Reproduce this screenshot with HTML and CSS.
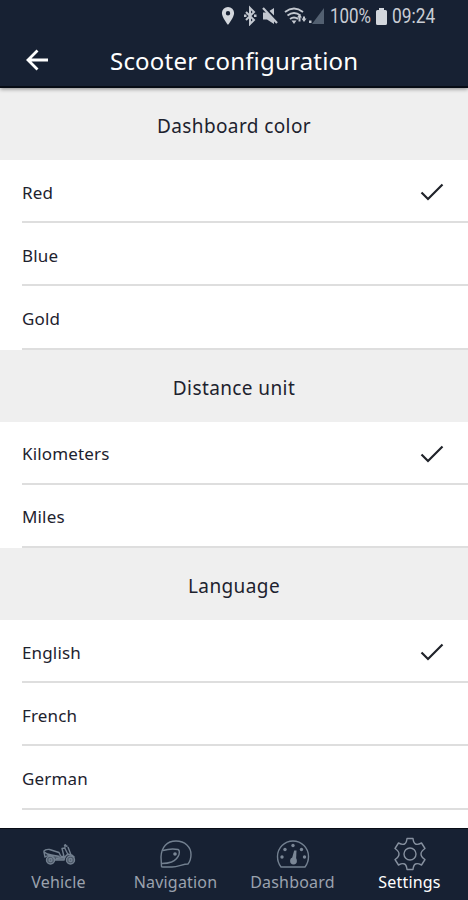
FILE: index.html
```html
<!DOCTYPE html>
<html lang="en">
<head>
<meta charset="utf-8">
<title>Scooter configuration</title>
<link rel="stylesheet" href="styles.css">
</head>
<body>
<div class="app">
  <header class="topbar">
    <div class="status">
      <svg class="status-icons" width="116" height="26" viewBox="0 0 116 26">
        <path fill="#d3d7dd" fill-rule="evenodd" d="M8 7a6.1 6.1 0 0 0-6.1 6.1C1.900 17.500 8 25 8 25s6.100-7.500 6.100-11.900A6.100 6.100 0 0 0 8 7zm0 4a2.200 2.200 0 1 1 0 4.400 2.200 2.200 0 0 1 0-4.400z"/>
        <path fill="none" stroke="#c3c8d0" stroke-width="2" d="M26 12l8 8-4 4V8l4 4-8 8"/>
        <path fill="#c3c8d0" d="M24 14.500h2.500v2.500H24zM34 14.500h2.500v2.500H34z"/>
        <path fill="#c3c8d0" d="M43 12.500h4l7-4.500v16l-7-4.500h-4z"/>
        <path stroke="#172133" stroke-width="3" d="M44.500 8l14 14"/>
        <path stroke="#c3c8d0" stroke-width="2.200" d="M43 8l14 15"/>
        <g fill="none" stroke="#c3c8d0" stroke-width="1.900"><path d="M65 12q9-7 18 0M67.500 15.500q6.500-5 13 0M70 19q4-3 8 0"/></g>
        <path fill="#c3c8d0" d="M71.500 20.500h5l-2.500 3.500zM77 17.500l2.500-3.500 2.500 3.500h-1.500v4h-2v-4zM81.500 18.500h1.500v-2h2v2h1.500L84 22zM89 20.500h2.500V23H89z"/>
        <path fill="#536071" d="M104 8v16H92z"/>
      </svg>
      <span class="percent">100%</span>
      <svg class="battery" width="11" height="17" viewBox="0 0 11 17"><path fill="#d3d7dd" d="M3 0h5v2h1.500q1.500 0 1.500 1.500v12Q11 17 9.500 17h-8Q0 17 0 15.500v-12Q0 2 1.500 2H3z"/></svg>
      <span class="clock">09:24</span>
    </div>
    <div class="titlebar">
      <svg class="back" width="24" height="24" viewBox="0 0 24 24"><path fill="none" stroke="#fff" stroke-width="2.800" d="M23 12H3M12.500 2.500L3 12l9.500 9.500"/></svg>
      <h1>Scooter configuration</h1>
    </div>
  </header>

  <main class="content">
    <section>
      <h2>Dashboard color</h2>
      <ul>
        <li><span>Red</span><svg class="check" width="24" height="18" viewBox="0 0 24 18"><path d="M1.500 9.500L8 16 22.500 1.500"/></svg></li>
        <li><span>Blue</span></li>
        <li><span>Gold</span></li>
      </ul>
    </section>
    <section>
      <h2>Distance unit</h2>
      <ul>
        <li><span>Kilometers</span><svg class="check" width="24" height="18" viewBox="0 0 24 18"><path d="M1.500 9.500L8 16 22.500 1.500"/></svg></li>
        <li><span>Miles</span></li>
      </ul>
    </section>
    <section>
      <h2>Language</h2>
      <ul>
        <li><span>English</span><svg class="check" width="24" height="18" viewBox="0 0 24 18"><path d="M1.500 9.500L8 16 22.500 1.500"/></svg></li>
        <li><span>French</span></li>
        <li><span>German</span></li>
      </ul>
    </section>
  </main>

  <nav class="tabs">
    <a class="tab">
      <svg width="34" height="34" viewBox="0 0 34 34">
        <g class="shade"><circle cx="8.500" cy="23" r="4"/><circle cx="28.500" cy="23" r="4"/><path d="M6 20l6-2 10 2v3h-9z"/></g>
        <circle cx="8.500" cy="23" r="4"/><circle cx="28.500" cy="23" r="4"/><circle cx="8.500" cy="23" r="1.500"/><circle cx="28.500" cy="23" r="1.500"/>
        <path d="M1.500 14.500q2-2.500 6-2l9.500 3 2 4M1.500 14.500q3 3 8 3.500l8 1.500M2 15l1 5q6-4 10 3h9q1-5 5-6M22 8l3.500 1.500M24 7.500q-2 2-1 4l3 6q4-.500 6.500 3M23 11l-3 .500 2 8h-3M26 10l3 8M14 21.500l8-1"/>
      </svg>
      <span>Vehicle</span>
    </a>
    <a class="tab">
      <svg width="34" height="34" viewBox="0 0 34 34">
        <path d="M2.500 29.500L2 20C2.500 10 8 4 17 4c9 0 15 6 15 13.500 0 4-1 7-3 9.500-5 0-10 3-16 3H4q-1.500 0-1.500-.500z"/>
        <path d="M4 13.500Q12 11 19 12.500q2 1 1 5-1.500 5-7.500 7.500-4 1.500-9.500 1.500"/>
        <circle class="solid" cx="16" cy="17" r="1.800"/>
      </svg>
      <span>Navigation</span>
    </a>
    <a class="tab">
      <svg width="34" height="34" viewBox="0 0 34 34">
        <path d="M5 30Q1.500 25.500 1.500 19.500a15.500 15.500 0 0 1 31 0q0 6-3.500 10.500z"/>
        <g class="solid"><circle cx="6" cy="20" r="1.700"/><circle cx="9" cy="12.500" r="1.700"/><circle cx="17" cy="8.500" r="1.700"/><circle cx="25.500" cy="12.500" r="1.700"/><circle cx="28.500" cy="20" r="1.700"/><circle cx="17.500" cy="24" r="3.400"/><path d="M15.500 23l2.700-9.500h2.300L20 24z"/></g>
      </svg>
      <span>Dashboard</span>
    </a>
    <a class="tab active">
      <svg width="34" height="34" viewBox="0 0 34 34">
        <circle cx="17" cy="17" r="6"/>
        <path d="M14 1.500h6q.500 4.500 2.500 5.500t6-1l3.500 5.500q-4 2.500-4 5.500t4 5.500L28.500 28q-4-2-6-1t-2.500 5.500h-6q-.500-4.500-2.500-5.500t-6 1L2 22.500Q6 20 6 17t-4-5.500L5.500 6q4 2 6 1T14 1.500z"/>
      </svg>
      <span>Settings</span>
    </a>
  </nav>
</div>
</body>
</html>
```
FILE: styles.css
```css
* { box-sizing: border-box; }
body { margin: 0; background: #fff; color: #1d222e; font-family: "Noto Sans", sans-serif; }
h1, h2, ul { margin: 0; padding: 0; font-weight: 400; }
svg { display: block; flex: none; }
.app { height: 900px; display: flex; flex-direction: column; overflow: hidden; }
.topbar { height: 88px; flex: none; background: #172133; border-bottom: 2px solid #070c15; box-shadow: 0 1px 4px rgba(0,0,0,.45); z-index: 1; }
.status { height: 34px; padding-left: 220px; display: flex; align-items: flex-start; color: #c9cdd5; font: 19.5px/34px Roboto, sans-serif; }
.percent { width: 42px; margin-left: -6px; transform: scaleX(.87); transform-origin: left; }
.battery { margin: 8px 5px 0 4px; }
.clock { transform: scaleX(.89); transform-origin: left; }
.titlebar { height: 52px; display: flex; align-items: center; padding-left: 25px; color: #fff; }
h1 { margin-left: 61px; padding-top: 2px; font-size: 24px; line-height: 52px; letter-spacing: .2px; white-space: nowrap; }
.content { flex: 1; min-height: 0; overflow: hidden; }
h2 { height: 72px; background: #efefef; font-size: 19px; line-height: 76px; letter-spacing: .4px; text-align: center; }
ul { list-style: none; }
li { height: 63.2px; margin-left: 22px; padding-right: 24px; display: flex; align-items: center; justify-content: space-between; border-bottom: 2px solid #dedede; font-size: 17px; letter-spacing: .15px; }
li span { padding-top: 3px; }
.check { margin-top: 3px; fill: none; stroke: #20232a; stroke-width: 2.2; }
.tabs { height: 72px; flex: none; display: grid; grid-template-columns: repeat(4, 1fr); background: #172133; border-top: 1px solid #080d16; }
.tab { display: flex; flex-direction: column; align-items: center; padding-top: 8px; color: #9ba2ae; font-size: 16px; line-height: 22px; letter-spacing: .2px; }
.tab svg { fill: none; stroke: #738090; stroke-width: 1.4; stroke-linejoin: round; }
.tab .solid { fill: #7b8796; stroke: none; }
.tab .shade { fill: #4c5868; stroke: none; }
.tab.active { color: #fff; }
.tab.active svg { stroke: #8791a0; }
```
